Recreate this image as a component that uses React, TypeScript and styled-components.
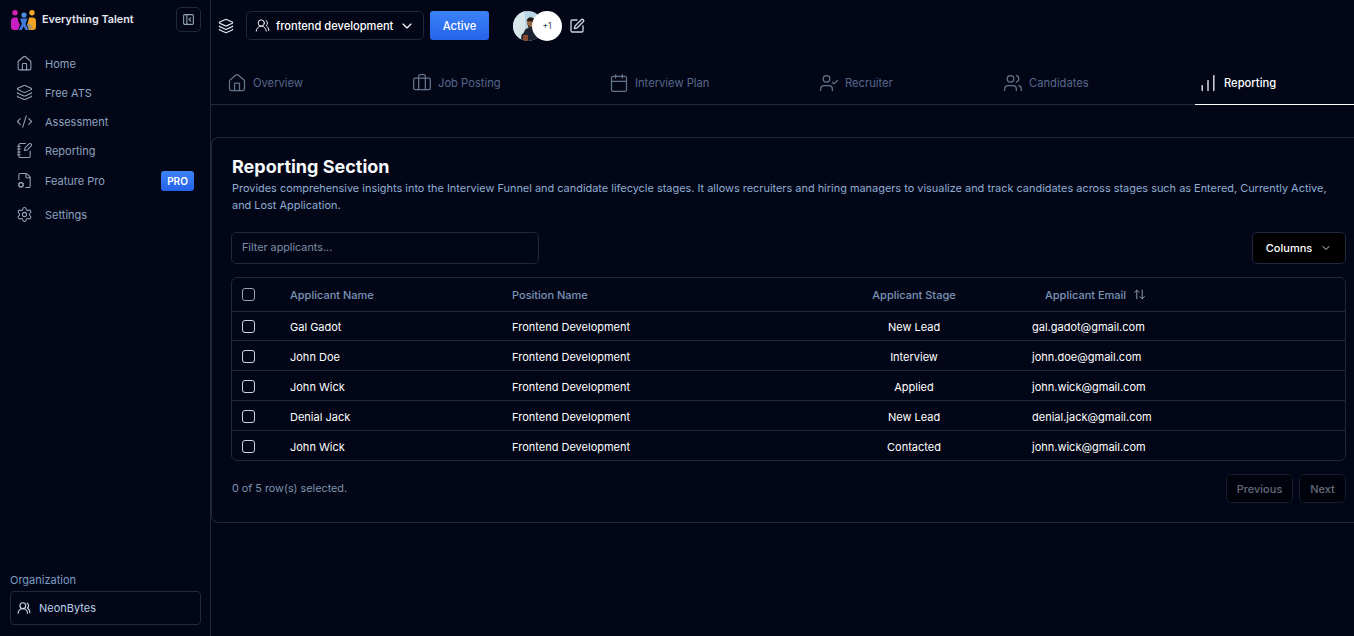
import React from "react";
import styled, { createGlobalStyle } from "styled-components";
import {
  House, Layers, CodeXml, NotebookPen, FileCog, Settings, PanelLeftClose, UsersRound,
  ChevronDown, SquarePen, Briefcase, Calendar, UserCheck, Users, ChartNoAxesColumnIncreasing, ArrowUpDown,
} from "lucide-react";

const Global = createGlobalStyle`
  html, body { margin: 0; padding: 0; height: 100%; background: #020617; }
  body { font-family: Inter, "Liberation Sans", sans-serif; overflow: hidden; }
  * { box-sizing: border-box; }
`;

const Shell = styled.div`display: flex; width: 1354px; height: 636px; background: #020617; color: #fff;`;

const Sidebar = styled.aside`
  width: 211px; flex: none; height: 100%; border-right: 1px solid #1e293b;
  display: flex; flex-direction: column; padding: 7px 9px 11px 10px;
`;
const Brand = styled.div`display: flex; align-items: center; height: 25px; gap: 6px;`;
const BrandName = styled.span`font-size: 10.8px; font-weight: 600; color: #e2e8f0; flex: 1; white-space: nowrap;`;
const CollapseBtn = styled.button`
  width: 25px; height: 25px; border: 1px solid #1e293b; border-radius: 5px; background: transparent;
  color: #94a3b8; display: flex; align-items: center; justify-content: center; padding: 0;
`;
const Nav = styled.nav`display: flex; flex-direction: column; margin-top: 17px; padding: 0 7px 0 6px;`;
const NavItem = styled.div<{ $h: number }>`
  display: flex; align-items: center; gap: 12px; height: ${p => p.$h}px; font-size: 11px; font-weight: 400; color: #8da2bf;
  svg { color: #94a3b8; flex: none; }
`;
const NavLabel = styled.span`flex: 1;`;
const ProBadge = styled.span`
  width: 33px; height: 20px; border-radius: 3px; background: linear-gradient(#3b82f6, #2563eb); color: #fff;
  font-size: 10px; font-weight: 600; display: flex; align-items: center; justify-content: center;
`;
const Spacer = styled.div`flex: 1;`;
const OrgLabel = styled.div`font-size: 11px; color: #7d9cc4; margin-bottom: 4px;`;
const OrgBox = styled.div`
  height: 34px; border: 1px solid #1e293b; border-radius: 4px; display: flex; align-items: center; gap: 8px;
  padding-left: 6px; font-size: 11px; font-weight: 400; color: #bcd0ea;
  svg { color: #cbd5e1; flex: none; }
`;

const Main = styled.main`flex: 1; min-width: 0; display: flex; flex-direction: column;`;
const TopBar = styled.div`display: flex; align-items: center; height: 51px; padding-left: 7px; flex: none;`;
const LayersWrap = styled.span`display: flex; color: #e2e8f0; margin-right: 12px;`;
const Select = styled.div`
  width: 178px; height: 29px; border: 1px solid #1e293b; border-radius: 5px; display: flex; align-items: center;
  padding: 0 8px 0 8px; gap: 6px; font-size: 11.1px; font-weight: 500; color: #fff;
  svg { flex: none; }
`;
const SelectText = styled.span`flex: 1; white-space: nowrap;`;
const ActiveBtn = styled.button`
  width: 59px; height: 29px; margin-left: 6px; border: none; border-radius: 3px; background: linear-gradient(#3b82f6, #2563eb);
  color: #fff; font: 500 11.2px Inter, sans-serif; padding: 0;
`;
const AvatarGroup = styled.div`display: flex; align-items: center; margin-left: 24px;`;
const Avatar = styled.span`width: 30px; height: 30px; border-radius: 50%; overflow: hidden; display: block;`;
const MoreAvatar = styled.span`
  width: 30px; height: 30px; border-radius: 50%; background: #fff; color: #3b3f4a; font-size: 8.5px; margin-left: -11px;
  display: flex; align-items: center; justify-content: center; position: relative;
`;
const EditIcon = styled.span`display: flex; color: #cbd5e1; margin-left: 7px;`;

const Tabs = styled.div`
  display: flex; height: 54px; border-bottom: 1px solid #1e293b; flex: none; padding-top: 9px;
`;
const Tab = styled.div<{ $w: number; $active?: boolean }>`
  width: ${p => p.$w}px; display: flex; align-items: center; gap: 6px; padding: 2px 0 0 ${p => (p.$active ? 3 : 16)}px; height: 45px; flex: none;
  font-size: 11.2px; font-weight: ${p => (p.$active ? 500 : 400)};
  color: ${p => (p.$active ? "#fff" : "#56688a")};
  margin-bottom: -1px;
  border-bottom: 1px solid ${p => (p.$active ? "#fff" : "transparent")};
  svg { color: ${p => (p.$active ? "#fff" : "#64748b")}; flex: none; }
`;

const Card = styled.section`
  margin-top: 32px; height: 386px; border: 1px solid #1e293b; border-right: none; border-radius: 8px 0 0 8px;
  padding: 17px 8px 0 19px; flex: none;
`;
const Title = styled.h1`margin: 0; padding-left: 1px; font-size: 18px; line-height: 24px; font-weight: 700; color: #f8fafc;`;
const Desc = styled.p`margin: 1px 0 0; padding-left: 1px; width: 1100px; font-size: 10.93px; line-height: 17px; color: #8fadd2;`;
const Toolbar = styled.div`display: flex; justify-content: space-between; align-items: center; margin-top: 18px;`;
const Filter = styled.input`
  width: 308px; height: 32px; border: 1px solid #1e293b; border-radius: 5px; background: transparent; padding: 0 10px 1px;
  font: 400 10.8px Inter, sans-serif; color: #fff;
  &::placeholder { color: #7f8ea6; opacity: 1; }
`;
const ColumnsBtn = styled.button`
  width: 94px; height: 32px; background: #000; border: 1px solid #1e293b; border-radius: 5px; color: #fff;
  font: 500 11px Inter, sans-serif; display: flex; align-items: center; justify-content: center; gap: 8px; padding: 0;
  svg { color: #cbd5e1; }
`;
const TableBox = styled.div`margin-top: 13px; border: 1px solid #1e293b; border-radius: 6px; overflow: hidden;`;
const Table = styled.table`width: 100%; border-collapse: collapse; table-layout: fixed;`;
const Th = styled.th<{ $align?: string; $pl?: number }>`
  height: 33px; font-size: 11px; font-weight: 500; color: #7b93b5; text-align: ${p => p.$align || "left"};
  padding: 1px 0 0 ${p => p.$pl ?? 0}px; border-bottom: 1px solid #1e293b; white-space: nowrap;
`;
const Td = styled.td<{ $align?: string; $pl?: number }>`
  font-size: 11px; font-weight: 400; color: #fff; text-align: ${p => p.$align || "left"};
  padding: 3px 0 0 ${p => p.$pl ?? 0}px; white-space: nowrap;
`;
const Tr = styled.tr`
  height: 29.9px;
  & + & td { border-top: 1px solid #1e293b; }
`;
const Check = styled.span`
  display: block; width: 13px; height: 13px; border: 1px solid #cbd5e1; border-radius: 3px; margin-top: -2px;
`;
const HeadCheck = styled(Check)`border-color: #94a3b8; margin-top: -1px;`;
const SortHead = styled.span`
  display: inline-flex; align-items: center; gap: 7px; svg { color: #94a3b8; flex: none; }
`;
const Footer = styled.div`display: flex; align-items: center; margin-top: 13px; font-size: 10.8px; color: #7f93ad;`;
const FooterText = styled.span`flex: 1; padding-left: 1px;`;
const PageBtn = styled.button<{ $w: number }>`
  width: ${p => p.$w}px; height: 29px; margin-left: 6px; background: #01030c; border: 1px solid #141c2e; border-radius: 5px;
  color: #646b78; font: 500 11px Inter, sans-serif; padding: 0;
`;

const LogoMark = () => (
  <svg width="26" height="24" viewBox="0 -2 26 24" aria-hidden>
    <defs>
      <linearGradient id="lg" x1="0" x2="1" y1="0" y2="1">
        <stop offset="0" stopColor="#3b82f6" />
        <stop offset="1" stopColor="#f59e0b" />
      </linearGradient>
    </defs>
    <circle cx="5" cy="2.7" r="2.7" fill="#d61fb3" />
    <circle cx="14" cy="5" r="2.6" fill="#4f8fe0" />
    <circle cx="22" cy="2.7" r="2.7" fill="#f5a623" />
    <path d="M1 11 Q1 7.5 4.5 7.5 L7.5 7.5 Q8 12 10 14.5 L8 20 L4 20 Q1 20 1 17 Z" fill="#c81fc0" />
    <path d="M19 7.5 L22.5 7.5 Q26 7.5 26 11 L26 17 Q26 20 23 20 L19 20 L17 14.5 Q18.5 12 19 7.5 Z" fill="#f2a31f" />
    <path d="M10 8.5 L17.5 8.5 L15.5 14 L18.5 20 L15.5 20 L13.7 16.5 L11.8 20 L8.8 20 L11.8 14 Z" fill="#3f78d8" />
    <path d="M17 14 L19 20 L24 20 Q22 13 17 14 Z" fill="url(#lg)" opacity=".7" />
  </svg>
);

const Portrait = () => (
  <svg width="30" height="30" viewBox="0 0 30 30" aria-hidden>
    <rect width="30" height="30" fill="#b9d6e4" />
    <rect y="0" width="12" height="30" fill="#d6e6ea" />
    <path d="M8 30 Q8 18 15 17 L22 17 Q26 20 26 30 Z" fill="#1b2430" />
    <path d="M3 19 L10 14 L13 17 L10 23 Z" fill="#d8e4e8" />
    <circle cx="18" cy="12" r="4.2" fill="#9a6a48" />
    <path d="M13.5 10 Q15 5.5 19 6.5 Q22.5 7.5 22 11 Z" fill="#231a16" />
    <path d="M15 14 Q18 18 21 14 L21 16 Q18 19 15 16 Z" fill="#2a1d17" />
    <rect x="10" y="24" width="5" height="6" fill="#8a4a2e" />
  </svg>
);

const navItems = [
  { icon: House, label: "Home", h: 29 },
  { icon: Layers, label: "Free ATS", h: 29 },
  { icon: CodeXml, label: "Assessment", h: 29 },
  { icon: NotebookPen, label: "Reporting", h: 29 },
  { icon: FileCog, label: "Feature Pro", h: 31, pro: true },
  { icon: Settings, label: "Settings", h: 37 },
];

const tabs = [
  { icon: House, label: "Overview", w: 185 },
  { icon: Briefcase, label: "Job Posting", w: 197 },
  { icon: Calendar, label: "Interview Plan", w: 210 },
  { icon: UserCheck, label: "Recruiter", w: 184 },
  { icon: Users, label: "Candidates", w: 208 },
  { icon: ChartNoAxesColumnIncreasing, label: "Reporting", w: 159, active: true },
];

const rows = [
  ["Gal Gadot", "New Lead", "gal.gadot@gmail.com"],
  ["John Doe", "Interview", "john.doe@gmail.com"],
  ["John Wick", "Applied", "john.wick@gmail.com"],
  ["Denial Jack", "New Lead", "denial.jack@gmail.com"],
  ["John Wick", "Contacted", "john.wick@gmail.com"],
];

export default function App() {
  return (
    <Shell>
      <Global />
      <Sidebar>
        <Brand>
          <LogoMark />
          <BrandName>Everything Talent</BrandName>
          <CollapseBtn aria-label="Collapse sidebar"><PanelLeftClose size={13} /></CollapseBtn>
        </Brand>
        <Nav>
          {navItems.map(n => (
            <NavItem key={n.label} $h={n.h}>
              <n.icon size={17} strokeWidth={1.5} />
              <NavLabel>{n.label}</NavLabel>
              {n.pro && <ProBadge>PRO</ProBadge>}
            </NavItem>
          ))}
        </Nav>
        <Spacer />
        <OrgLabel>Organization</OrgLabel>
        <OrgBox><UsersRound size={14} />NeonBytes</OrgBox>
      </Sidebar>
      <Main>
        <TopBar>
          <LayersWrap><Layers size={16} strokeWidth={1.75} /></LayersWrap>
          <Select>
            <UsersRound size={15} strokeWidth={1.5} />
            <SelectText>frontend development</SelectText>
            <ChevronDown size={16} strokeWidth={1.75} />
          </Select>
          <ActiveBtn>Active</ActiveBtn>
          <AvatarGroup>
            <Avatar><Portrait /></Avatar>
            <MoreAvatar>+1</MoreAvatar>
          </AvatarGroup>
          <EditIcon><SquarePen size={16} strokeWidth={2} /></EditIcon>
        </TopBar>
        <Tabs>
          {tabs.map(t => (
            <Tab key={t.label} $w={t.w} $active={t.active}>
              <t.icon size={20} strokeWidth={1.5} />
              {t.label}
            </Tab>
          ))}
        </Tabs>
        <Card>
          <Title>Reporting Section</Title>
          <Desc>
            Provides comprehensive insights into the Interview Funnel and candidate lifecycle stages. It allows recruiters and hiring managers to visualize and track candidates across stages such as Entered, Currently Active, and Lost Application.
          </Desc>
          <Toolbar>
            <Filter placeholder="Filter applicants..." readOnly />
            <ColumnsBtn>Columns<ChevronDown size={12} /></ColumnsBtn>
          </Toolbar>
          <TableBox>
            <Table>
              <colgroup>
                <col style={{ width: 48 }} />
                <col style={{ width: 222 }} />
                <col style={{ width: 324 }} />
                <col style={{ width: 176 }} />
                <col />
              </colgroup>
              <thead>
                <tr>
                  <Th $pl={10}><HeadCheck /></Th>
                  <Th $pl={10}>Applicant Name</Th>
                  <Th $pl={10}>Position Name</Th>
                  <Th $align="center">Applicant Stage</Th>
                  <Th $pl={43}>
                    <SortHead>Applicant Email<ArrowUpDown size={13} strokeWidth={1.75} /></SortHead>
                  </Th>
                </tr>
              </thead>
              <tbody>
                {rows.map((r, i) => (
                  <Tr key={i}>
                    <Td $pl={10}><Check /></Td>
                    <Td $pl={10}>{r[0]}</Td>
                    <Td $pl={10}>Frontend Development</Td>
                    <Td $align="center">{r[1]}</Td>
                    <Td $pl={30}>{r[2]}</Td>
                  </Tr>
                ))}
              </tbody>
            </Table>
          </TableBox>
          <Footer>
            <FooterText>0 of 5 row(s) selected.</FooterText>
            <PageBtn $w={67}>Previous</PageBtn>
            <PageBtn $w={47}>Next</PageBtn>
          </Footer>
        </Card>
      </Main>
    </Shell>
  );
}
